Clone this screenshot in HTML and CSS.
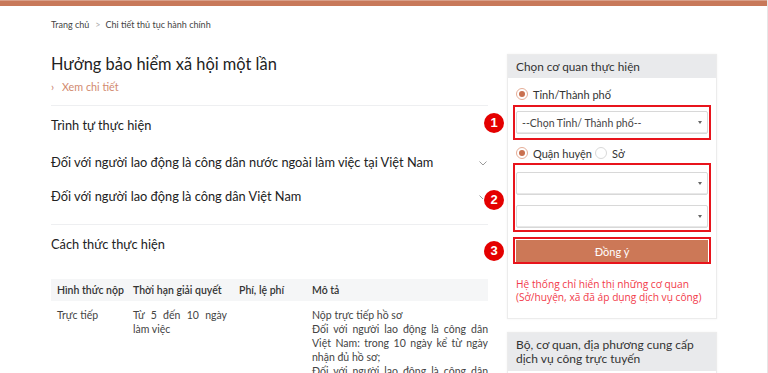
FILE: index.html
```html
<!DOCTYPE html>
<html lang="vi">
<head>
<meta charset="utf-8">
<title>Chi tiết thủ tục hành chính</title>
<link rel="stylesheet" href="styles.css">
</head>
<body>
<div class="page">
  <div class="topbar"></div>
  <div class="container">
    <div class="breadcrumb"><span>Trang chủ</span><span class="sep">&gt;</span><span>Chi tiết thủ tục hành chính</span></div>
    <div class="main">
      <div class="left">
        <h1 class="title">Hưởng bảo hiểm xã hội một lần</h1>
        <div class="more"><span class="more-arrow">&rsaquo;</span>Xem chi tiết</div>
        <div class="section">
          <h2 class="sec-title">Trình tự thực hiện</h2>
          <div class="acc">
            <span>Đối với người lao động là công dân nước ngoài làm việc tại Việt Nam</span>
            <svg class="chev" width="8" height="5" viewBox="0 0 8 5"><path d="M0.5 0.5 L4 4 L7.5 0.5" fill="none" stroke="#9a9a9a" stroke-width="1"/></svg>
          </div>
          <div class="acc">
            <span>Đối với người lao động là công dân Việt Nam</span>
            <svg class="chev" width="8" height="5" viewBox="0 0 8 5"><path d="M0.5 0.5 L4 4 L7.5 0.5" fill="none" stroke="#9a9a9a" stroke-width="1"/></svg>
          </div>
        </div>
        <div class="section section-last">
          <h2 class="sec-title">Cách thức thực hiện</h2>
          <table class="tbl">
            <colgroup><col class="c1"><col class="c2"><col class="c3"><col class="c4"></colgroup>
            <thead>
              <tr><th>Hình thức nộp</th><th>Thời hạn giải quyết</th><th>Phí, lệ phí</th><th>Mô tả</th></tr>
            </thead>
            <tbody>
              <tr>
                <td>Trực tiếp</td>
                <td class="just">Từ 5 đến 10 ngày làm việc</td>
                <td></td>
                <td class="just">Nộp trực tiếp hồ sơ<br>Đối với người lao động là công dân Việt Nam: trong 10 ngày kể từ ngày nhận đủ hồ sơ;<br>Đối với người lao động là công dân nước ngoài làm việc tại Việt Nam</td>
              </tr>
            </tbody>
          </table>
        </div>
      </div>
      <div class="right">
        <div class="card">
          <div class="card-head">Chọn cơ quan thực hiện</div>
          <div class="card-body">
            <div class="radio-row"><span class="radio on"></span><span>Tỉnh/Thành phố</span></div>
            <div class="mark">
              <span class="badge">1</span>
              <div class="select"><span>--Chọn Tỉnh/ Thành phố--</span><span class="caret"></span></div>
            </div>
            <div class="radio-row row2"><span class="radio on"></span><span>Quận huyện</span><span class="radio"></span><span>Sở</span></div>
            <div class="mark mark2">
              <span class="badge">2</span>
              <div class="select"><span></span><span class="caret"></span></div>
              <div class="select"><span></span><span class="caret"></span></div>
            </div>
            <div class="mark mark3">
              <span class="badge">3</span>
              <button class="btn">Đồng ý</button>
            </div>
            <p class="note">Hệ thống chỉ hiển thị những cơ quan (Sở/huyện, xã đã áp dụng dịch vụ công)</p>
          </div>
        </div>
        <div class="card card2">
          <div class="card-head head2">Bộ, cơ quan, địa phương cung cấp dịch vụ công trực tuyến</div>
          <div class="card-body"></div>
        </div>
      </div>
    </div>
  </div>
</div>
</body>
</html>
```
FILE: styles.css
```css
* { box-sizing: border-box; }
html, body { margin: 0; padding: 0; background: #fff; overflow: hidden; }
body { font-family: Lato, "Noto Sans", sans-serif; color: #333; }
.page { width: 768px; height: 373px; overflow: hidden; border-right: 1px solid #e6e6e6; }
.topbar { height: 6px; background: #c8795a; border-top: 1px solid #d9a08a; }
.container { padding-left: 51px; }
.breadcrumb { margin-top: 12px; font-size: 9px; line-height: 14px; color: #444; display: flex; }
.breadcrumb .sep { color: #aaa; margin: 0 5px 0 6px; }
.main { display: flex; gap: 19px; margin-top: 20px; align-items: flex-start; }
.left { width: 437px; }
.title { margin: 0; font-size: 16.4px; line-height: 24px; font-weight: 400; color: #222; }
.more { margin-top: 4px; font-size: 10.8px; line-height: 14px; color: #d28a6f; display: flex; align-items: center; }
.more-arrow { width: 11px; font-size: 11px; color: #c9826a; }
.section { border-top: 1px solid #eeeff1; margin-top: 11px; padding-top: 9px; }
.section-last { margin-top: 11px; }
.sec-title { margin: 0 0 10px; font-size: 12.8px; line-height: 20px; font-weight: 400; color: #222; }
.acc { height: 34px; display: flex; align-items: center; justify-content: space-between; font-size: 12.8px; color: #222; padding-right: 1px; }
.chev { display: block; margin-top: 2px; }
.tbl { width: 437px; border-collapse: collapse; table-layout: fixed; margin-top: 25px; font-size: 10.5px; color: #444; }
.c1 { width: 76px; } .c2 { width: 106px; } .c3 { width: 73px; } .c4 { width: 182px; }
.tbl th { background: #f5f6f7; text-align: left; font-weight: 600; color: #333; height: 22px; padding: 0 6px; white-space: nowrap; }
.tbl td { vertical-align: top; padding: 7px 6px 0; line-height: 14px; }
.tbl td.just { text-align: justify; }
.tbl td.just:last-child { padding-right: 0; }
.right { width: 210px; margin-top: 2px; }
.card { border: 1px solid #ececec; box-shadow: 0 0 2px rgba(0,0,0,0.06); }
.card-head { background: #e9eaec; font-size: 11.8px; line-height: 16px; padding: 4px 8px 3px; color: #333; }
.card-body { padding: 8px 5px 14px 5px; }
.radio-row { display: flex; align-items: center; height: 16px; font-size: 11px; color: #333; padding-left: 3px; }
.radio { width: 12px; height: 12px; border-radius: 50%; border: 1px solid #d9d9d9; margin-right: 5px; position: relative; flex: none; }
.radio.on { border-color: #e5ad97; }
.radio.on::after { content: ""; position: absolute; left: 2px; top: 2px; width: 6px; height: 6px; border-radius: 50%; background: #c9704f; }
.radio-row span + .radio { margin-left: 3px; }
.row2 { margin-top: 5px; }
.mark { position: relative; border: 2px solid #e8141c; padding: 4px 1px 4px 1px; margin-top: 3px; }
.mark2 { margin-top: 2px; padding: 7px 1px 2px; }
.mark2 .select + .select { margin-top: 10px; }
.mark3 { margin-top: 5px; padding: 1px 1px 0; }
.badge { position: absolute; left: -31px; top: 50%; transform: translateY(-50%); width: 20px; height: 20px; border-radius: 50%; background: #e40000; color: #fff; font-family: "Liberation Sans", Arial, sans-serif; font-weight: 700; font-size: 13px; line-height: 20px; text-align: center; box-shadow: 0 0 0 1px #fff; }
.mark2 .badge { margin-top: 2px; }
.select { height: 23px; border: 1px solid #d8d8d8; border-radius: 2px; box-shadow: inset 0 -1px 0 #e8e8e8; display: flex; align-items: center; justify-content: space-between; padding: 0 5px 0 5px; font-size: 10.5px; color: #444; font-family: Lato, sans-serif; }
.caret { width: 0; height: 0; border-left: 2.5px solid transparent; border-right: 2.5px solid transparent; border-top: 3px solid #666; }
.btn { display: block; width: 100%; height: 22px; border: 0; background: #cc7857; color: #fff; font-family: Lato, sans-serif; font-size: 11px; padding: 0; }
.note { margin: 14px 0 0 3px; font-size: 10.2px; line-height: 13px; color: #f23a4a; font-family: "Open Sans", Lato, sans-serif; }
.card2 { margin-top: 13px; }
.head2 { padding: 5px 8px 5px; line-height: 14px; font-size: 12px; }
.card2 .card-body { height: 20px; }
```
